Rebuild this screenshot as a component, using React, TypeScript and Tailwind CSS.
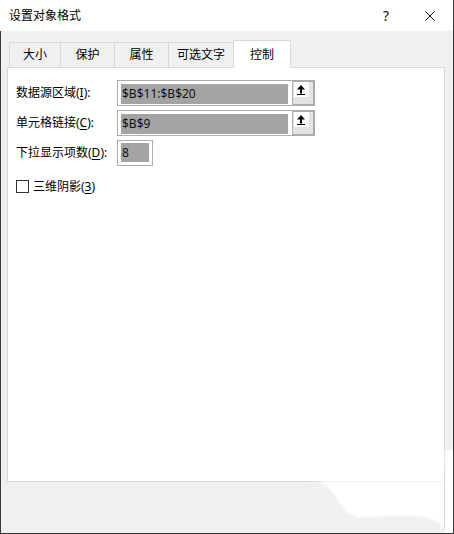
import React from "react";

function UploadBtn() {
  return (
    <div className="w-[22px] h-[26px] border-2 border-l-0 border-[#ababab] bg-[#e3e3e3] pl-[1px]">
      <div className="w-[15px] h-[15px] bg-white">
        <svg width="15" height="15" viewBox="0 0 15 15">
          <polygon points="7,3 3,7.5 11,7.5" fill="#000" />
          <rect x="6" y="7" width="2" height="4.5" fill="#000" />
          <rect x="3" y="12" width="8" height="1" fill="#000" />
        </svg>
      </div>
    </div>
  );
}

function Field({ text, withBtn = true }: { text: string; withBtn?: boolean }) {
  return (
    <div className="flex">
      <div className="w-[176px] h-[26px] border border-[#adadad] bg-white pl-[3px] pt-[3px] pr-[4px] pb-[1px]">
        <div className="h-full bg-[#a4a4a4] flex items-center pl-[1px] text-[12px] text-[#111] leading-none">
          {text}
        </div>
      </div>
      {withBtn && <UploadBtn />}
    </div>
  );
}

export default function App() {
  const tabs = [
    { t: "大小", w: "w-[51px]" },
    { t: "保护", w: "w-[54px]" },
    { t: "属性", w: "w-[54px]" },
    { t: "可选文字", w: "w-[65px]" },
  ];
  return (
    <div className="relative w-[454px] h-[534px] bg-[#f0f0f0] border-r border-b border-[#3a3a3a] flex flex-col text-[12px] text-black font-['Noto_Sans','Noto_Sans_CJK_SC',sans-serif] overflow-hidden">
      {/* Title bar */}
      <div className="h-[31px] shrink-0 bg-white flex items-center justify-between pl-[9px] pr-[18px]">
        <span className="text-[12px] leading-none">设置对象格式</span>
        <div className="flex items-center">
          <span className="w-[20px] text-center text-[14px] leading-none text-[#111]">?</span>
          <svg className="ml-[29px]" width="10" height="10" viewBox="0 0 10 10">
            <path d="M0.5,0.5 L9.5,9.5 M9.5,0.5 L0.5,9.5" stroke="#111" strokeWidth="1" />
          </svg>
        </div>
      </div>

      {/* Body */}
      <div className="flex-1 border-l border-[#3a3a3a] pt-[9px] flex flex-col">
        {/* Tabs */}
        <div className="flex items-end h-[27px] pl-[8px]">
          {tabs.map((tab, i) => (
            <div
              key={i}
              className={`${tab.w} h-[25px] border-t border-l border-[#d9d9d9] flex items-center justify-center text-[12px] leading-none`}
            >
              {tab.t}
            </div>
          ))}
          <div className="w-[58px] h-[28px] -mb-px relative z-10 bg-white border-t border-l border-r border-[#d9d9d9] flex items-center justify-center text-[12px] leading-none">
            控制
          </div>
        </div>

        {/* Panel */}
        <div className="ml-[6px] w-[438px] h-[415px] bg-white border border-[#d9d9d9] pt-[12px] pl-[8px]">
          <div className="flex flex-col gap-[4px]">
            <div className="flex items-center h-[26px]">
              <div className="w-[101px] leading-none">
                数据源区域(<span className="underline underline-offset-2">I</span>):
              </div>
              <Field text="$B$11:$B$20" />
            </div>
            <div className="flex items-center h-[26px]">
              <div className="w-[101px] leading-none">
                单元格链接(<span className="underline underline-offset-2">C</span>):
              </div>
              <Field text="$B$9" />
            </div>
            <div className="flex items-center h-[26px]">
              <div className="w-[101px] leading-none whitespace-nowrap">
                下拉显示项数(<span className="underline underline-offset-2">D</span>):
              </div>
              <div className="w-[36px] h-[26px] border border-[#adadad] bg-white pl-[3px] pt-[2px] pr-[3px] pb-[3px]">
                <div className="h-full bg-[#a4a4a4] flex items-center pl-[1px] text-[12px] text-[#111] leading-none">
                  8
                </div>
              </div>
            </div>
          </div>
          <div className="flex items-center mt-[14px]">
            <div className="w-[13px] h-[13px] border border-[#333] bg-white" />
            <span className="ml-[4px] leading-none">
              三维阴影(<span className="underline underline-offset-2">3</span>)
            </span>
          </div>
        </div>
      </div>

      {/* torn/blurred corner overlay */}
      <svg className="absolute inset-0 pointer-events-none" width="453" height="533" viewBox="0 0 453 533">
        <defs>
          <filter id="soft" x="-10%" y="-10%" width="120%" height="120%">
            <feGaussianBlur stdDeviation="1.2" />
          </filter>
        </defs>
        <path
          d="M308,481 C318,480 324,483 331,491 C339,501 344,512 356,517 L400,516 C420,515 432,517 440,524 L447,535 L456,535 L456,450 L445,450 L445,481 Z"
          fill="#ffffff"
          filter="url(#soft)"
        />
        <rect x="444" y="470" width="1" height="61" fill="#dadada" />
      </svg>
    </div>
  );
}
